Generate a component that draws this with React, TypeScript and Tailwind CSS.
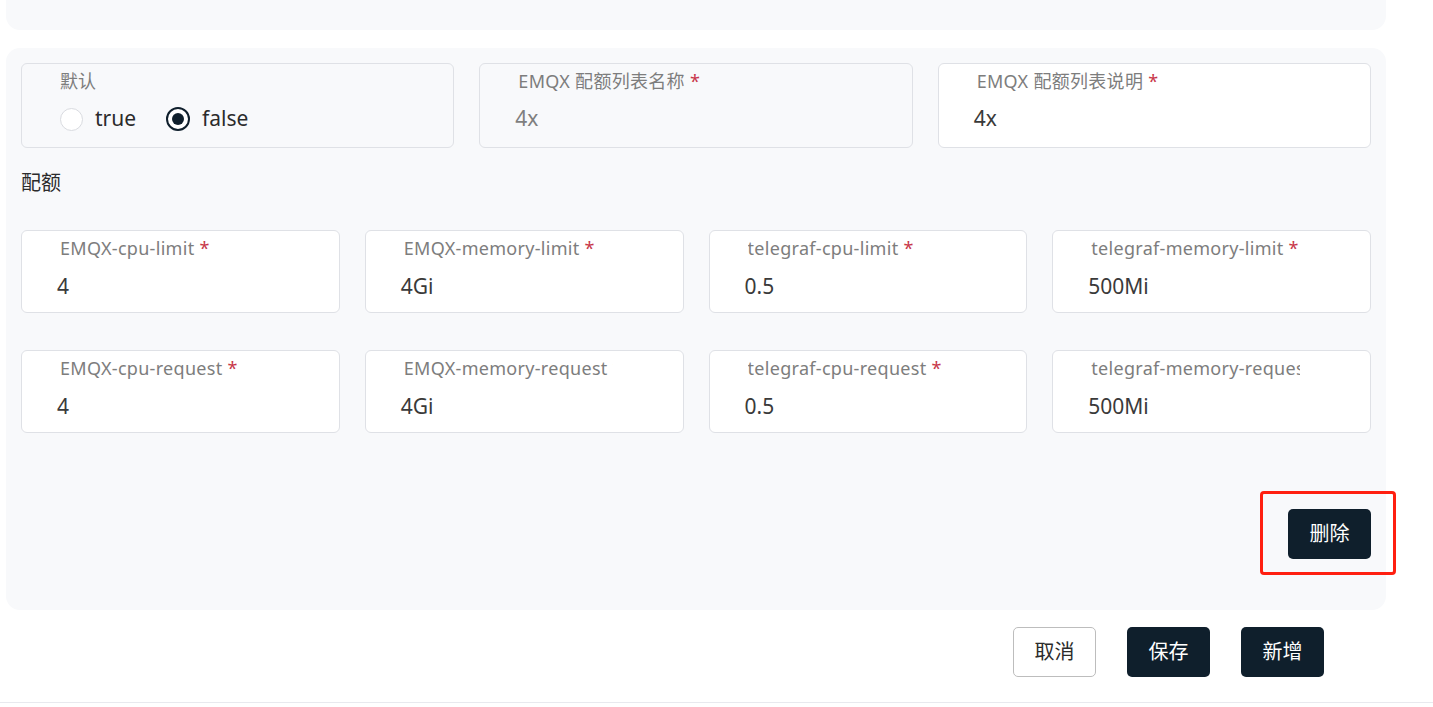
import React from "react";

const FONT = { fontFamily: '"Noto Sans", "Noto Sans CJK SC", sans-serif' };

function Field({
  label,
  value,
  required = true,
}: {
  label: string;
  value: string;
  required?: boolean;
}) {
  return (
    <div className="h-[83px] rounded-[6px] border border-[#dfe1e6] bg-white flex flex-col">
      <div className="ml-[38px] pt-[5px] h-[29px] w-[209px] flex items-center overflow-hidden whitespace-nowrap text-[18px] tracking-[0.3px] text-[#7d7d7d]">
        <span>{label}</span>
        {required && <span className="ml-[5px] text-[#c8374a]">*</span>}
      </div>
      <div className="pl-[35px] mt-[13px] h-[28px] flex items-center text-[21px] text-[#3a3a3a]">
        {value}
      </div>
    </div>
  );
}

export default function App() {
  const row1 = [
    ["EMQX-cpu-limit", "4", true],
    ["EMQX-memory-limit", "4Gi", true],
    ["telegraf-cpu-limit", "0.5", true],
    ["telegraf-memory-limit", "500Mi", true],
  ] as const;
  const row2 = [
    ["EMQX-cpu-request", "4", true],
    ["EMQX-memory-request", "4Gi", true],
    ["telegraf-cpu-request", "0.5", true],
    ["telegraf-memory-request", "500Mi", true],
  ] as const;
  return (
    <div className="w-[1433px] h-[707px] bg-white overflow-hidden" style={FONT}>
      <div className="pl-[6px] pr-[47px]">
        <div className="h-[30px] bg-[#f8f9fb] rounded-b-[14px]" />
        <div className="mt-[18px] h-[562px] bg-[#f8f9fb] rounded-[14px] px-[15px] pt-[15px] flex flex-col">
          <div className="grid grid-cols-3 gap-[25px]">
            <div className="h-[85px] rounded-[6px] border border-[#dfe1e6] bg-[#f8f9fb] flex flex-col">
              <div className="pl-[38px] pt-[6px] h-[29px] flex items-center text-[18px] text-[#7d7d7d]">默认</div>
              <div className="pl-[38px] mt-[12px] h-[28px] flex items-center text-[21px] text-[#2b2b2b]">
                <span className="w-[23px] h-[23px] rounded-full border border-[#d9dbe0] bg-white" />
                <span className="ml-[12px]">true</span>
                <span className="ml-[30px] w-[24px] h-[24px] rounded-full border-[2px] border-[#0f1f2c] bg-white flex items-center justify-center">
                  <span className="w-[12px] h-[12px] rounded-full bg-[#0f1f2c]" />
                </span>
                <span className="ml-[12px]">false</span>
              </div>
            </div>
            <div className="h-[85px] rounded-[6px] border border-[#dfe1e6] bg-[#f8f9fb] flex flex-col">
              <div className="pl-[38px] pt-[6px] h-[29px] flex items-center text-[18px] tracking-[0.3px] text-[#7d7d7d] whitespace-nowrap">
                EMQX 配额列表名称<span className="ml-[5px] text-[#c8374a]">*</span>
              </div>
              <div className="pl-[35px] mt-[12px] h-[28px] flex items-center text-[21px] text-[#7f7f7f]">4x</div>
            </div>
            <div className="h-[85px] rounded-[6px] border border-[#dfe1e6] bg-white flex flex-col">
              <div className="pl-[38px] pt-[6px] h-[29px] flex items-center text-[18px] tracking-[0.3px] text-[#7d7d7d] whitespace-nowrap">
                EMQX 配额列表说明<span className="ml-[5px] text-[#c8374a]">*</span>
              </div>
              <div className="pl-[35px] mt-[12px] h-[28px] flex items-center text-[21px] text-[#3a3a3a]">4x</div>
            </div>
          </div>
          <div className="mt-[21px] h-[28px] flex items-center text-[20px] text-[#2b2b2b]">配额</div>
          <div className="mt-[33px] grid grid-cols-4 gap-x-[25px] gap-y-[37px]">
            {row1.map(([l, v, r]) => (
              <Field key={l} label={l} value={v} required={r} />
            ))}
            {row2.map(([l, v, r]) => (
              <Field key={l} label={l} value={v} required={r} />
            ))}
          </div>
          <div className="mt-[76px] flex justify-end">
            <div className="relative">
              <button className="w-[83px] h-[50px] rounded-[5px] bg-[#0f1f2c] text-white text-[20px]">删除</button>
              <div className="absolute left-[-28px] right-[-25px] top-[-18px] bottom-[-16px] border-[3px] border-[#ff1f10] rounded-[4px] pointer-events-none" />
            </div>
          </div>
        </div>
        <div className="mt-[17px] flex justify-end pr-[62px] gap-[31px]">
          <button className="w-[83px] h-[50px] rounded-[5px] border border-[#bdbdbd] bg-white text-[#2b2b2b] text-[20px]">取消</button>
          <button className="w-[83px] h-[50px] rounded-[5px] bg-[#0f1f2c] text-white text-[20px]">保存</button>
          <button className="w-[83px] h-[50px] rounded-[5px] bg-[#0f1f2c] text-white text-[20px]">新增</button>
        </div>
      </div>
      <div className="mt-[25px] h-px bg-[#e8e9ee]" />
    </div>
  );
}
